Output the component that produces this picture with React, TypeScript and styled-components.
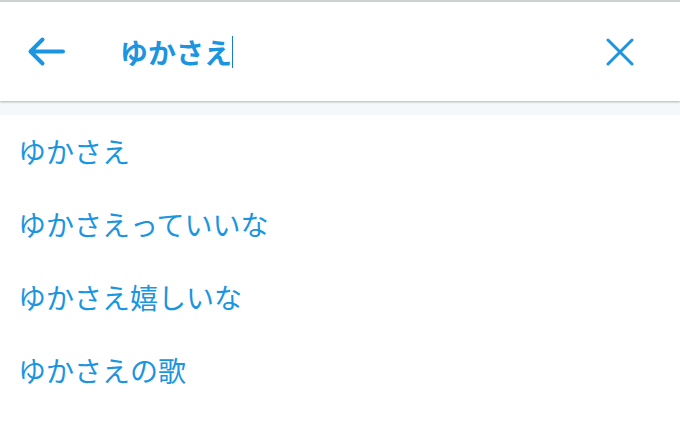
import React from "react";
import styled, { createGlobalStyle } from "styled-components";

const BLUE = "#1b95e0";

const GlobalStyle = createGlobalStyle`
  html, body {
    margin: 0;
    padding: 0;
    background: #ffffff;
  }
  body {
    font-family: "Noto Sans CJK JP", "Noto Sans", sans-serif;
  }
`;

const Page = styled.div`
  width: 680px;
  height: 427px;
  overflow: hidden;
  background: #ffffff;
  border-top: 2px solid #cfd2d4;
  box-sizing: border-box;
`;

const SearchBar = styled.header`
  position: relative;
  z-index: 1;
  display: flex;
  align-items: center;
  height: 99px;
  padding: 0 46px 0 27px;
  background: #ffffff;
  box-shadow: 0 1px 2px rgba(0, 0, 0, 0.28);
`;

const IconButton = styled.button`
  display: flex;
  align-items: center;
  justify-content: center;
  padding: 0;
  border: 0;
  background: none;
  color: ${BLUE};
`;

const Query = styled.div`
  flex: 1;
  display: flex;
  align-items: center;
  margin-left: 55px;
  font-size: 28px;
  font-weight: 700;
  color: ${BLUE};
  line-height: 1;
`;

const Caret = styled.span`
  display: inline-block;
  width: 0;
  height: 32px;
  margin-left: 0;
  border-left: 1.5px solid #1a7fc2;
`;

const Gap = styled.div`
  height: 14px;
  background: #f5f8fa;
`;

const Suggestions = styled.ul`
  list-style: none;
  margin: 0;
  padding: 0;
`;

const Suggestion = styled.li<{ $first?: boolean }>`
  display: flex;
  align-items: center;
  height: 73px;
  padding-left: 18px;
  margin-top: ${(p) => (p.$first ? "-1px" : "0")};
  font-size: 28px;
  color: ${BLUE};
  line-height: 1;
`;

const items = ["ゆかさえ", "ゆかさえっていいな", "ゆかさえ嬉しいな", "ゆかさえの歌"];

const App: React.FC = () => {
  return (
    <>
      <GlobalStyle />
      <Page>
        <SearchBar>
          <IconButton aria-label="戻る">
            <svg width="38" height="31" viewBox="0 0 38 31" fill="none">
              <path
                d="M36 15.5H3.5M15.5 3.5L3.5 15.5L15.5 27.5"
                stroke="currentColor"
                strokeWidth="4"
                strokeLinecap="round"
                strokeLinejoin="round"
              />
            </svg>
          </IconButton>
          <Query>
            ゆかさえ
            <Caret />
          </Query>
          <IconButton aria-label="クリア">
            <svg width="28" height="28" viewBox="0 0 28 28" fill="none">
              <path
                d="M2 2L26 26M26 2L2 26"
                stroke="currentColor"
                strokeWidth="3"
                strokeLinecap="round"
              />
            </svg>
          </IconButton>
        </SearchBar>
        <Gap />
        <Suggestions>
          {items.map((t, i) => (
            <Suggestion key={t} $first={i === 0}>
              {t}
            </Suggestion>
          ))}
        </Suggestions>
      </Page>
    </>
  );
};

export default App;
